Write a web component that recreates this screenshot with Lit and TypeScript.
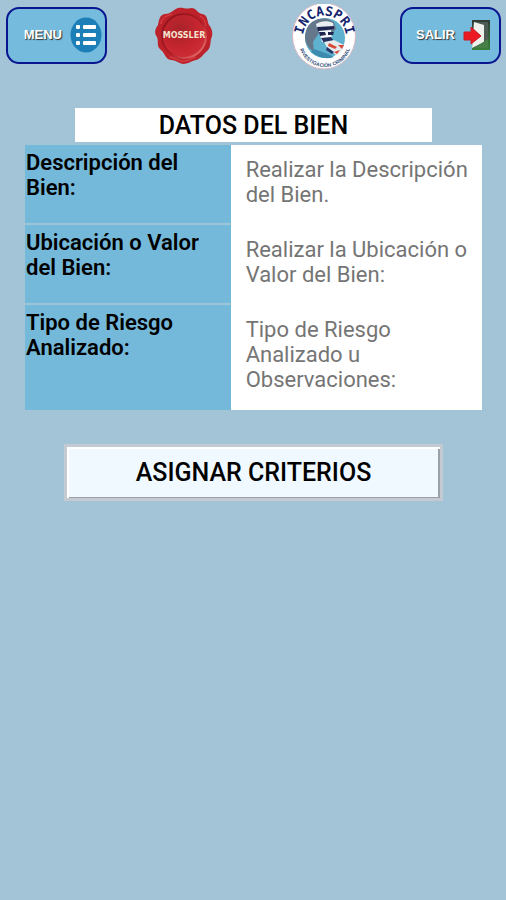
import { LitElement, html, css } from "lit";
import { customElement } from "lit/decorators.js";

interface Field {
  id: string;
  label: string;
  hint: string;
  rows: number;
}

const FIELDS: Field[] = [
  { id: "descripcion", label: "Descripción del Bien:", hint: "Realizar la Descripción del Bien.", rows: 2 },
  { id: "ubicacion", label: "Ubicación o Valor del Bien:", hint: "Realizar la Ubicación o Valor del Bien:", rows: 2 },
  { id: "riesgo", label: "Tipo de Riesgo Analizado:", hint: "Tipo de Riesgo Analizado u Observaciones:", rows: 3 },
];

@customElement("app-header")
export class AppHeader extends LitElement {
  static styles = css`
    :host {
      display: block;
    }
    header {
      display: flex;
      justify-content: space-between;
      align-items: flex-start;
      padding: 4px 5px 0 6px;
    }
    .logos {
      display: flex;
      gap: 77px;
      padding-left: 3px;
    }
    .nav {
      display: flex;
      align-items: center;
      justify-content: flex-end;
      gap: 8px;
      box-sizing: border-box;
      width: 101px;
      height: 57px;
      margin-top: 3px;
      padding: 0 3px 2px;
      border: 2px solid #0a1590;
      border-radius: 13px;
      background: #74bbdd;
      color: #fff;
      font: 700 13px/18px "Liberation Sans", Arial, sans-serif;
      text-shadow: 1px 1px 1px #333;
    }
    .exit {
      padding-right: 8px;
    }
    svg {
      display: block;
      flex: none;
    }
    .seal-text {
      font: 700 8px "DejaVu Sans", sans-serif;
      fill: #f4e3cf;
    }
    .ring-text {
      font: 700 13px "DejaVu Sans Mono", monospace;
      fill: #14246e;
    }
    .motto {
      font: 700 5px "Liberation Sans", sans-serif;
      fill: #34507c;
    }
  `;

  render() {
    return html`
      <header>
        <button class="nav" type="button">
          MENU
          <svg width="32" height="36" viewBox="0 0 32 36" aria-hidden="true">
            <ellipse cx="16" cy="18" rx="15.5" ry="17.5" fill="#1d7fb8" />
            <g fill="#fff">
              <rect x="6" y="8" width="4" height="4" rx="1" />
              <rect x="6" y="16" width="4" height="4" rx="1" />
              <rect x="6" y="24" width="4" height="4" rx="1" />
              <rect x="13" y="8" width="13" height="4" rx="1" />
              <rect x="13" y="16" width="13" height="4" rx="1" />
              <rect x="13" y="24" width="13" height="4" rx="1" />
            </g>
          </svg>
        </button>
        <div class="logos">
          <svg width="60" height="62" viewBox="0 0 60 62" role="img" aria-label="Mossler">
            <defs>
              <radialGradient id="wax" cx="40%" cy="35%" r="70%">
                <stop offset="0" stop-color="#a82229" />
                <stop offset="0.6" stop-color="#c4252e" />
                <stop offset="1" stop-color="#cf2f37" />
              </radialGradient>
              <linearGradient id="rim" x1="0" y1="0" x2="1" y2="1">
                <stop offset="0" stop-color="#8a1219" />
                <stop offset="0.55" stop-color="#b01d26" />
                <stop offset="1" stop-color="#f4837f" />
              </linearGradient>
            </defs>
            <path
              d="M22 5C27 2 32 6 37 4C43 4 43 9 48 10C54 11 53 17 55 21C59 26 59 31 57 35C56 40 57 44 52 48C49 50 47 55 42 56C37 57 34 60 29 60C24 59 22 56 17 56C11 55 11 49 7 46C2 42 5 38 3 33C0 29 1 25 4 21C5 17 5 11 11 10C16 10 18 7 22 5Z"
              fill="#bd2129"
            />
            <circle cx="30" cy="32" r="22" fill="url(#wax)" stroke="url(#rim)" stroke-width="2" />
            <path
              d="M7 20C7 14 12 12 18 10M46 12C51 14 51 19 52 22M16 53C22 54 25 58 30 57C36 57 39 53 42 53"
              fill="none"
              stroke="#dd4a50"
            />
            <text class="seal-text" x="30" y="34" text-anchor="middle">MOSSLER</text>
          </svg>
          <svg width="66" height="66" viewBox="0 0 66 66" role="img" aria-label="Incaspri">
            <ellipse cx="33" cy="32" rx="31.5" ry="33" fill="#fff" stroke="#d8b7c4" />
            <circle cx="34" cy="34" r="20" fill="#5eb1cf" />
            <path d="M15 27C17 18 27 13 37 15L43 18L45 25L39 31L28 29L22 38L23 48C16 43 12 36 15 27Z" fill="#65788b" />
            <path d="M25 20C29 17 37 16 42 19L43 24L26 24Z" fill="#e9eef2" />
            <path d="M26 23L43 22V25L27 27Z" fill="#20254f" />
            <path d="M28 27L40 26L41 37L31 38Z" fill="#f4f7fa" />
            <path d="M28 28L34 28L35 31L29 32ZM37 28L43 28L42 31L37 31Z" fill="#20254f" />
            <path d="M30 34L40 33L43 37L33 39Z" fill="#23305d" />
            <path d="M33 38L43 36L53 41C52 46 49 50 45 51L37 45Z" fill="#e6ebed" />
            <path d="M38 39L46 43L44 45L37 42ZM47 41L53 41L51 45ZM43 48L49 46L46 50Z" fill="#d54a38" />
            <path d="M36 43L43 48L41 50L35 46Z" fill="#263866" />
            <path d="M23 45L37 50L43 53C34 56 27 53 20 48Z" fill="#3a8bae" />
            <path id="top-arc" d="M12 33A21.5 21.5 0 1 1 55 33" fill="none" />
            <path id="low-arc" d="M8 38A26 25 0 0 0 60 38" fill="none" />
            <text class="ring-text" text-anchor="middle"><textPath href="#top-arc" startOffset="50%">INCASPRI</textPath></text>
            <text class="motto" text-anchor="middle"><textPath href="#low-arc" startOffset="50%">INVESTIGACIÓN CRIMINAL</textPath></text>
          </svg>
        </div>
        <button class="nav exit" type="button">
          SALIR
          <svg width="28" height="34" viewBox="0 0 28 34" aria-hidden="true">
            <defs>
              <linearGradient id="door" x1="0" y1="0" x2="0" y2="1">
                <stop offset="0" stop-color="#303b38" />
                <stop offset="1" stop-color="#39803a" />
              </linearGradient>
            </defs>
            <rect x="9" y="2" width="18" height="30" fill="url(#door)" />
            <path d="M11 4H25V24L11 30Z" fill="#4c5b54" />
            <path d="M11 4L21 7V24L9 30Z" fill="#eef0ec" />
            <path d="M11 30L25 21V30Z" fill="#468046" />
            <path d="M1 14H8V9L18 18L8 26V22H1Z" fill="#ec1822" stroke="#c4202a" />
          </svg>
        </button>
      </header>
    `;
  }
}

@customElement("app-root")
export class AppRoot extends LitElement {
  static styles = css`
    :host {
      display: block;
      box-sizing: border-box;
      min-height: 100vh;
      background: #a3c4d6;
      color: #000;
      font: 400 22px/25px Roboto, sans-serif;
    }
    form {
      display: flex;
      flex-direction: column;
      align-items: center;
      margin: 38px 24px 0 25px;
    }
    h1 {
      box-sizing: border-box;
      width: 78%;
      margin: 0 0 3px;
      padding: 5px 0 4px;
      background: #fff;
      font-size: 25px;
      font-weight: 500;
      line-height: 25px;
      text-align: center;
    }
    .fields {
      width: 100%;
    }
    .field {
      display: grid;
      grid-template-columns: 45% 55%;
    }
    label {
      padding: 5px 24px 0 1px;
      border-bottom: 2px solid #9cc5da;
      background: #74b9da;
      font-weight: 600;
    }
    .field:last-child label {
      border-bottom: 0;
    }
    textarea {
      display: block;
      min-width: 0;
      margin: 0;
      padding: 12px 12px 18px 15px;
      border: 0;
      outline: 0;
      border-radius: 0;
      background: #fff;
      color: #000;
      font: inherit;
      resize: none;
      overflow: hidden;
    }
    textarea::placeholder {
      color: #757575;
      opacity: 1;
    }
    .assign {
      width: 83%;
      margin-top: 34px;
      padding: 13px 0;
      border: 3px solid #c3cad1;
      background: #f0f9ff;
      box-shadow: inset 2px 2px #fff, inset -2px -1px #9aa1a8;
      color: #000;
      font: 500 25px/25px Roboto, sans-serif;
    }
  `;

  render() {
    return html`
      <app-header></app-header>
      <form>
        <h1>DATOS DEL BIEN</h1>
        <div class="fields">
          ${FIELDS.map(
            (f) => html`
              <div class="field">
                <label for=${f.id}>${f.label}</label>
                <textarea id=${f.id} rows=${f.rows} placeholder=${f.hint}></textarea>
              </div>
            `,
          )}
        </div>
        <button class="assign" type="button">ASIGNAR CRITERIOS</button>
      </form>
    `;
  }
}
